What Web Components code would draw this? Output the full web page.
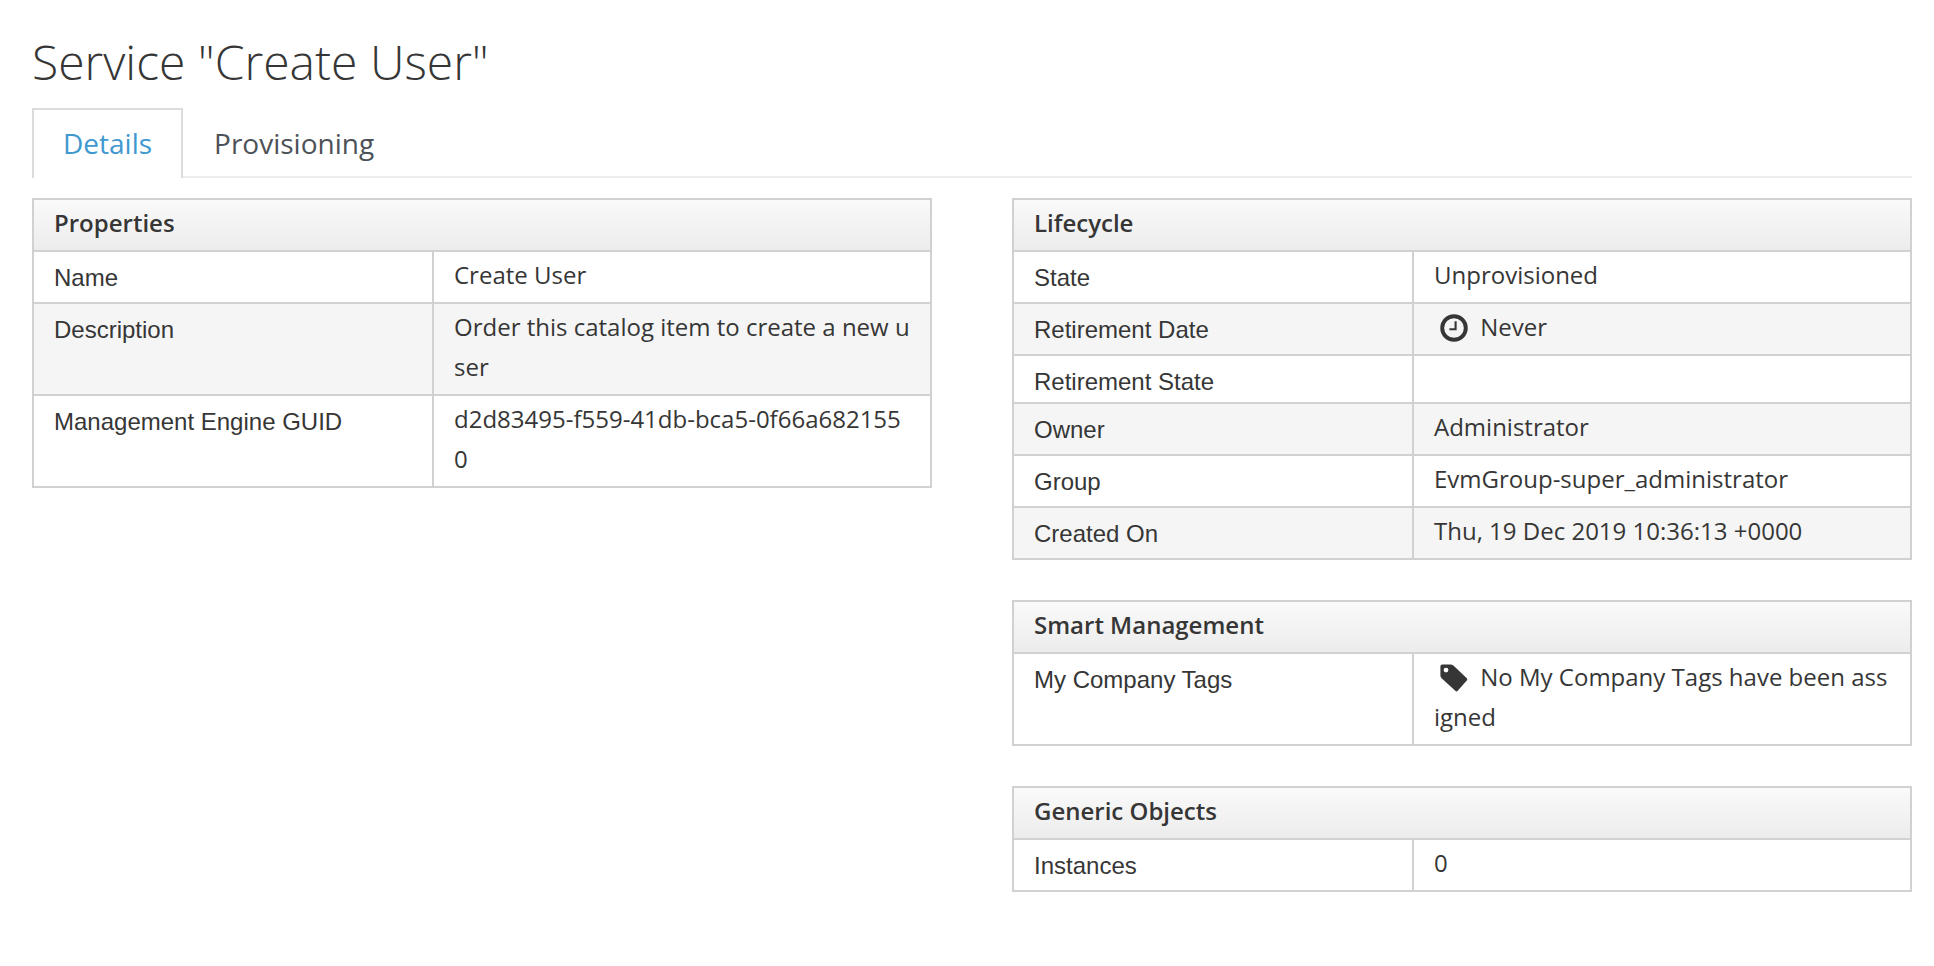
<!DOCTYPE html>
<html lang="en">
<head>
<meta charset="utf-8">
<title>Service "Create User"</title>
<style>
  body { margin: 0; background: #fff; color: #363636; font-family: "Open Sans", sans-serif; }
</style>
</head>
<body>
<service-page heading='Service "Create User"'>
  <tab-bar slot="tabs">
    <tab-link href="#details" active>Details</tab-link>
    <tab-link href="#provisioning">Provisioning</tab-link>
  </tab-bar>
  <summary-table slot="left" heading="Properties">
    <summary-value label="Name">Create User</summary-value>
    <summary-value label="Description">Order this catalog item to create a new user</summary-value>
    <summary-value label="Management Engine GUID">d2d83495-f559-41db-bca5-0f66a6821550</summary-value>
  </summary-table>
  <summary-table slot="right" heading="Lifecycle">
    <summary-value label="State">Unprovisioned</summary-value>
    <summary-value label="Retirement Date" icon="clock">Never</summary-value>
    <summary-value label="Retirement State"></summary-value>
    <summary-value label="Owner">Administrator</summary-value>
    <summary-value label="Group">EvmGroup-super_administrator</summary-value>
    <summary-value label="Created On">Thu, 19 Dec 2019 10:36:13 +0000</summary-value>
  </summary-table>
  <summary-table slot="right" heading="Smart Management">
    <summary-value label="My Company Tags" icon="tag">No My Company Tags have been assigned</summary-value>
  </summary-table>
  <summary-table slot="right" heading="Generic Objects">
    <summary-value label="Instances">0</summary-value>
  </summary-table>
</service-page>

<script>
const ICONS = {
  clock: `<circle cx="14" cy="14" r="11.8" fill="none" stroke="currentColor" stroke-width="3.9"/>
          <path d="M15.6 7.2V15.3H9.4" fill="none" stroke="currentColor" stroke-width="2.1"/>`,
  tag: `<path fill="currentColor" fill-rule="evenodd" d="M2.3 .5H10.4Q12.2 .5 13.4 1.6L26.8 14.2Q28 15.4 26.8 16.6L17.7 26.8Q16.5 28 15.3 26.8L1.6 14.2Q.4 13 .4 11.4V2.4Q.4 .5 2.3 .5ZM6 3.7A2.4 2.4 0 1 0 6 8.5A2.4 2.4 0 1 0 6 3.7Z"/>`
};

class ServicePage extends HTMLElement {
  connectedCallback() {
    const root = this.attachShadow({ mode: 'open' });
    root.innerHTML = `
      <style>
        :host { display: block; padding: 30px 22px 40px 32px; }
        h1 { margin: 0 0 14px; font-size: 48px; line-height: 64px; font-weight: 300; }
        .columns { display: grid; grid-template-columns: 1fr 1fr; gap: 80px; margin-top: 20px; align-items: start; }
        .column { display: flex; flex-direction: column; gap: 40px; min-width: 0; }
      </style>
      <h1></h1>
      <slot name="tabs"></slot>
      <main class="columns">
        <div class="column"><slot name="left"></slot></div>
        <div class="column"><slot name="right"></slot></div>
      </main>`;
    root.querySelector('h1').textContent = this.getAttribute('heading');
  }
}

class TabBar extends HTMLElement {
  connectedCallback() {
    this.attachShadow({ mode: 'open' }).innerHTML = `
      <style>
        :host { display: block; }
        nav { display: flex; border-bottom: 2px solid #ededed; }
      </style>
      <nav><slot></slot></nav>`;
  }
}

class TabLink extends HTMLElement {
  connectedCallback() {
    const root = this.attachShadow({ mode: 'open' });
    root.innerHTML = `
      <style>
        :host { display: block; margin-bottom: -2px; }
        a { display: block; padding: 13px 29px 15px; border: 2px solid transparent; border-bottom: 0;
            font-size: 28px; line-height: 40px; color: #4d5258; text-decoration: none; }
        :host([active]) a { color: #4098d0; background: #fff; border-color: #dcdcdc; }
      </style>
      <a><slot></slot></a>`;
    root.querySelector('a').href = this.getAttribute('href');
  }
}

class SummaryTable extends HTMLElement {
  connectedCallback() {
    const root = this.attachShadow({ mode: 'open' });
    root.innerHTML = `
      <style>
        :host { display: block; }
        table { width: 100%; table-layout: fixed; border-collapse: collapse; font-size: 24px; }
        .label { width: 400px; }
        th, td { border: 2px solid #d1d1d1; text-align: left; vertical-align: top; box-sizing: border-box; }
        thead th { padding: 3px 20px 7px; line-height: 40px; font-weight: 600; }
        thead { background: linear-gradient(#fafafa, #ececec); }
        tbody th { padding: 9px 20px 3px; line-height: 34px; font-weight: 400;
                   font-family: "Liberation Sans", Arial, sans-serif; }
        td { padding: 3px 20px 7px; line-height: 40px; word-break: break-all; }
        td:empty { padding: 0; }
        tbody tr:nth-child(even) { background: #f5f5f5; }
      </style>
      <table>
        <colgroup><col class="label"><col></colgroup>
        <thead><tr><th colspan="2" scope="colgroup"></th></tr></thead>
        <tbody></tbody>
      </table>`;
    root.querySelector('thead th').textContent = this.getAttribute('heading');
    const body = root.querySelector('tbody');
    [...this.children].forEach((item, i) => {
      const row = body.insertRow();
      const label = document.createElement('th');
      label.scope = 'row';
      label.textContent = item.getAttribute('label');
      row.append(label);
      const cell = row.insertCell();
      if (!item.textContent) return;
      const slot = document.createElement('slot');
      slot.name = item.slot = 'value-' + i;
      cell.append(slot);
    });
  }
}

class SummaryValue extends HTMLElement {
  connectedCallback() {
    const icon = ICONS[this.getAttribute('icon')];
    this.attachShadow({ mode: 'open' }).innerHTML = `
      <style>
        :host { display: inline; }
        svg { width: 28px; height: 28px; margin: -4px 6px 0; vertical-align: -6px; }
      </style>${icon ? `<svg viewBox="0 0 28 28" aria-hidden="true">${icon}</svg> ` : ''}<slot></slot>`;
  }
}

customElements.define('service-page', ServicePage);
customElements.define('tab-bar', TabBar);
customElements.define('tab-link', TabLink);
customElements.define('summary-table', SummaryTable);
customElements.define('summary-value', SummaryValue);
</script>
</body>
</html>
